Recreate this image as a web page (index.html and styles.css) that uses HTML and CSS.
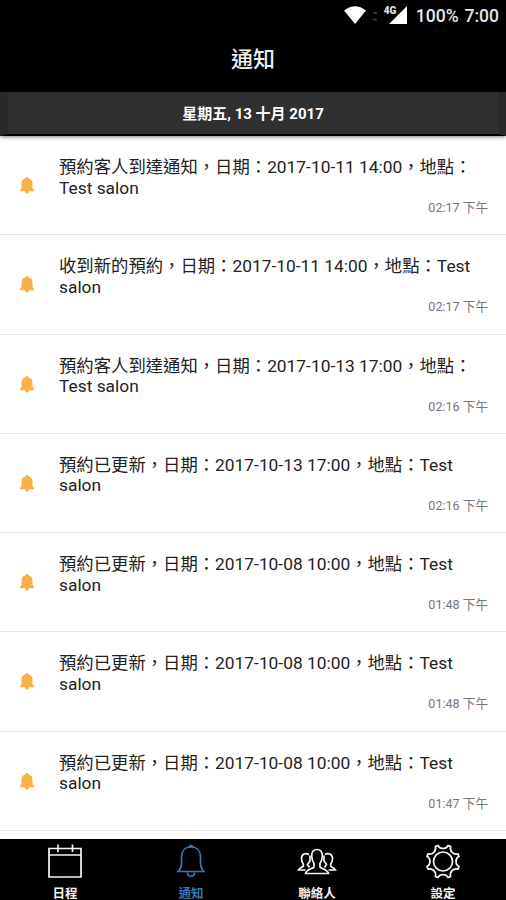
FILE: index.html
```html
<!DOCTYPE html>
<html lang="zh-Hant">
<head>
  <meta charset="UTF-8">
  <title>通知</title>
  <link rel="stylesheet" href="styles.css">
</head>
<body>
  <!-- shared bell for the rows -->
  <svg width="0" height="0" class="defs">
    <symbol id="bell" viewBox="0 0 14 17">
      <path d="M7 0C6.200 0 5.700.5 5.700 1.200 3 1.700 1.500 3.700 1.500 6.200V11L0 13V14.300H14V13L12.500 11V6.200C12.500 3.700 11 1.700 8.300 1.200 8.300.5 7.800 0 7 0ZM5 14.300C5.200 16 6 16.700 7 16.700S8.800 16 9 14.300Z"/>
    </symbol>
  </svg>

  <div class="app">
    <div class="status">
      <svg class="wifi" width="22" height="18" viewBox="0 0 22 18">
        <path d="M0 4.500Q11-4 22 4.500L11 18Z" fill="#fff"/>
      </svg>
      <svg class="dots" width="4" height="9" viewBox="0 0 4 9">
        <path d="M0 1H4M0 7.500H4" stroke="#333" stroke-width="2"/>
      </svg>
      <div class="signal">
        <svg width="18" height="18" viewBox="0 0 18 18">
          <path d="M18 0V18H0Z" fill="#fff"/>
        </svg>
        <span>4G</span>
      </div>
      <span class="battery">100%</span>
      <span>7:00</span>
    </div>

    <h1 class="title">通知</h1>
    <div class="date">星期五, 13 十月 2017</div>

    <ul class="list">
      <li>
        <svg class="bell"><use href="#bell"/></svg>
        <div class="content">
          <p>預約客人到達通知，日期：2017-10-11 14:00，地點：<br>Test salon</p>
          <div class="time">02:17 下午</div>
        </div>
      </li>
      <li>
        <svg class="bell"><use href="#bell"/></svg>
        <div class="content">
          <p>收到新的預約，日期：2017-10-11 14:00，地點：Test<br>salon</p>
          <div class="time">02:17 下午</div>
        </div>
      </li>
      <li>
        <svg class="bell"><use href="#bell"/></svg>
        <div class="content">
          <p>預約客人到達通知，日期：2017-10-13 17:00，地點：<br>Test salon</p>
          <div class="time">02:16 下午</div>
        </div>
      </li>
      <li>
        <svg class="bell"><use href="#bell"/></svg>
        <div class="content">
          <p>預約已更新，日期：2017-10-13 17:00，地點：Test<br>salon</p>
          <div class="time">02:16 下午</div>
        </div>
      </li>
      <li>
        <svg class="bell"><use href="#bell"/></svg>
        <div class="content">
          <p>預約已更新，日期：2017-10-08 10:00，地點：Test<br>salon</p>
          <div class="time">01:48 下午</div>
        </div>
      </li>
      <li>
        <svg class="bell"><use href="#bell"/></svg>
        <div class="content">
          <p>預約已更新，日期：2017-10-08 10:00，地點：Test<br>salon</p>
          <div class="time">01:48 下午</div>
        </div>
      </li>
      <li>
        <svg class="bell"><use href="#bell"/></svg>
        <div class="content">
          <p>預約已更新，日期：2017-10-08 10:00，地點：Test<br>salon</p>
          <div class="time">01:47 下午</div>
        </div>
      </li>
    </ul>

    <div class="tabs">
      <div class="tab">
        <svg width="36" height="36" viewBox="0 0 36 36">
          <path d="M2 4.500H34V33H2ZM2 11H34M11 .5V8M25.500 .5V8"/>
        </svg>
        <span>日程</span>
      </div>
      <div class="tab active">
        <svg width="36" height="36" viewBox="0 0 36 36">
          <path d="M16 3.500C16 .8 20 .8 20 3.500M18 3C11.500 3 8.500 7.500 8.500 13V19C8.500 23 7.500 25 5 27.500H31C28.500 25 27.500 23 27.500 19V13C27.500 7.500 24.500 3 18 3ZM14.500 28.500C14.500 33.500 21.500 33.500 21.500 28.500"/>
        </svg>
        <span>通知</span>
      </div>
      <div class="tab">
        <svg width="40" height="36" viewBox="0 0 40 36">
          <path d="M20 5.500C16.500 5.500 14.500 8 14.700 12C14.800 15 15.500 17.500 17 19.500V23C16 25 9.500 25 8.500 29.500H31.500C30.500 25 24 25 23 23V19.500C24.500 17.500 25.200 15 25.300 12C25.500 8 23.500 5.500 20 5.500Z"/>
          <path d="M12 10.500C9 8.500 4.500 10 4.500 14.500C4.500 17 5.300 19 6.300 20V22C5.500 23.500 2.500 23.500 1.500 26H8.500M13 11.500V17L10.500 20.500L12.500 23.500"/>
          <path d="M28 10.500C31 8.500 35.500 10 35.500 14.500C35.500 17 34.700 19 33.700 20V22C34.500 23.500 37.500 23.500 38.500 26H31.500M27 11.500V17L29.500 20.500L27.500 23.500"/>
        </svg>
        <span>聯絡人</span>
      </div>
      <div class="tab">
        <svg width="36" height="36" viewBox="0 0 36 36">
          <circle cx="18" cy="17.500" r="9.500"/>
          <path d="M12.800 1.500A6 6 0 0 0 23.200 1.500L25.600 2.500A6 6 0 0 0 33 9.900L34 12.300A6 6 0 0 0 34 22.700L33 25.100A6 6 0 0 0 25.600 32.500L23.200 33.500A6 6 0 0 0 12.800 33.500L10.400 32.500A6 6 0 0 0 3 25.100L2 22.700A6 6 0 0 0 2 12.300L3 9.900A6 6 0 0 0 10.400 2.500Z"/>
        </svg>
        <span>設定</span>
      </div>
    </div>
  </div>
</body>
</html>
```
FILE: styles.css
```css
* {
  margin: 0;
  padding: 0;
  box-sizing: border-box;
}
body {
  font-family: Roboto, "Noto Sans CJK TC", sans-serif;
  background: #fff;
}
ul {
  list-style: none;
}
.defs {
  display: block;
}
.app {
  display: flex;
  flex-direction: column;
  height: 900px;
  overflow: hidden;
}

.status {
  flex: none;
  display: flex;
  align-items: center;
  justify-content: flex-end;
  height: 32px;
  padding-right: 7px;
  background: #000;
  color: #e6e6e6;
  font-size: 17.5px;
  font-weight: 500;
}
.wifi,
.signal svg {
  margin-top: -2px;
}
.dots {
  margin: 0 6px 0 7px;
}
.signal {
  display: flex;
  position: relative;
  width: 24px;
  justify-content: flex-end;
  margin-right: 9px;
}
.signal span {
  position: absolute;
  left: 1px;
  top: -2px;
  font-size: 10px;
  line-height: 10px;
  font-weight: 900;
  text-shadow: 0 0 1px #000, 1px 1px 0 #000;
}
.battery {
  margin-right: 6px;
}

.title {
  flex: none;
  height: 60px;
  line-height: 55px;
  background: #000;
  color: #eee;
  font-size: 22px;
  font-weight: 500;
  text-align: center;
}
.date {
  flex: none;
  height: 44px;
  line-height: 44px;
  background: #303030;
  border-left: 8px solid #292929;
  border-right: 8px solid #292929;
  border-bottom: 2px solid #000;
  color: #fff;
  font-size: 15px;
  font-weight: 700;
  text-align: center;
  box-shadow: 0 1px 4px rgba(0, 0, 0, .5);
}

.list {
  flex: 1;
  min-height: 0;
}
.list li {
  display: flex;
  height: 99.25px;
  padding: 21px 18px 0 20px;
  border-bottom: 1px solid #e2e2e2;
}
.bell {
  flex: none;
  width: 14px;
  height: 17px;
  margin: 20px 25px 0 0;
  fill: #f9b04b;
}
.content {
  flex: 1;
}
.content p {
  color: #222;
  font-size: 17.35px;
  line-height: 20.5px;
  white-space: nowrap;
}
.time {
  margin-top: 1px;
  color: #777;
  font-size: 12.6px;
  line-height: 18px;
  text-align: right;
}

.tabs {
  flex: none;
  display: flex;
  height: 61px;
  padding-left: 2px;
  background: #000;
}
.tab {
  flex: 1;
  display: flex;
  flex-direction: column;
  align-items: center;
  padding-top: 5px;
  color: #f5f5f5;
  font-size: 12.5px;
  line-height: 18px;
  font-weight: 700;
}
.tab svg {
  flex: none;
  fill: none;
  stroke: currentColor;
  stroke-width: 1.7;
  margin-bottom: 5px;
}
.active {
  color: #3478b5;
}
```
